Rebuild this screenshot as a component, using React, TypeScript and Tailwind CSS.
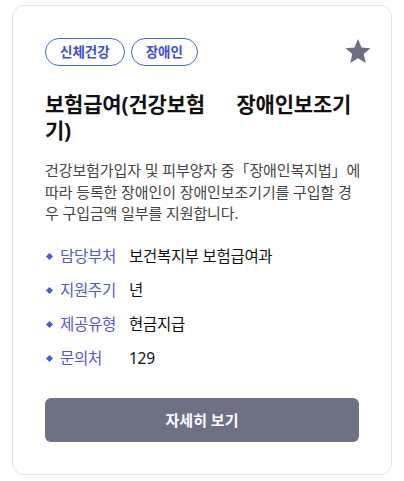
import React from 'react';

const FONT = "font-['Noto_Sans','Noto_Sans_CJK_KR',sans-serif]";

const tags = ['신체건강', '장애인'];

const details = [
  { label: '담당부처', value: '보건복지부 보험급여과' },
  { label: '지원주기', value: '년' },
  { label: '제공유형', value: '현금지급' },
  { label: '문의처', value: '129' },
];

export default function App() {
  return (
    <div className={`${FONT} bg-white w-[404px] h-[481px] pt-[5px] pl-[12px]`}>
      <div className="w-[380px] h-[470px] border border-[#e2e2e6] rounded-[12px] pt-8 pb-8 pl-8 pr-[26px] flex flex-col">
        <div className="flex items-center justify-between h-[28px]">
          <div className="flex gap-[6px]">
            {tags.map((t) => (
              <span
                key={t}
                className="h-[28px] px-[14px] flex items-center rounded-full border border-[#4068e0] text-[13.5px] font-semibold text-[#3f4fd3]"
              >
                {t}
              </span>
            ))}
          </div>
          <svg width="28" height="28" viewBox="0 0 24 24" className="mr-[-7px] mt-[-2px]">
            <path
              d="M12 1.8l3.05 7.1 7.7.68-5.84 5.07 1.74 7.53L12 18.2l-6.65 3.98 1.74-7.53L1.25 9.58l7.7-.68z"
              fill="#6c6f84"
            />
          </svg>
        </div>

        <h2 className="mt-[25px] text-[21px] leading-[26px] font-bold text-[#111] whitespace-pre-wrap break-all tracking-[-0.2px]">
          {'보험급여(건강보험      장애인보조기기)'}
        </h2>

        <p className="mt-[17px] text-[15px] leading-[21.5px] text-[#444] break-all tracking-[-0.1px]">
          건강보험가입자 및 피부양자 중「장애인복지법」에 따라 등록한 장애인이 장애인보조기기를 구입할 경우 구입금액 일부를 지원합니다.
        </p>

        <ul className="mt-[20px] flex flex-col gap-[10px]">
          {details.map((d) => (
            <li key={d.label} className="flex items-center h-[24px] text-[15.5px]">
              <span className="w-[5px] h-[5px] bg-[#4a5ad6] rotate-45 ml-[2px] mr-[8px]" />
              <span className="w-[69px] text-[#5356d4] tracking-[-0.3px]">{d.label}</span>
              <span className="text-[#111] tracking-[-0.3px]">{d.value}</span>
            </li>
          ))}
        </ul>

        <button className="mt-auto h-[44px] w-[314px] rounded-[6px] bg-[#6e7084] text-white text-[15px] font-bold">
          자세히 보기
        </button>
      </div>
    </div>
  );
}
